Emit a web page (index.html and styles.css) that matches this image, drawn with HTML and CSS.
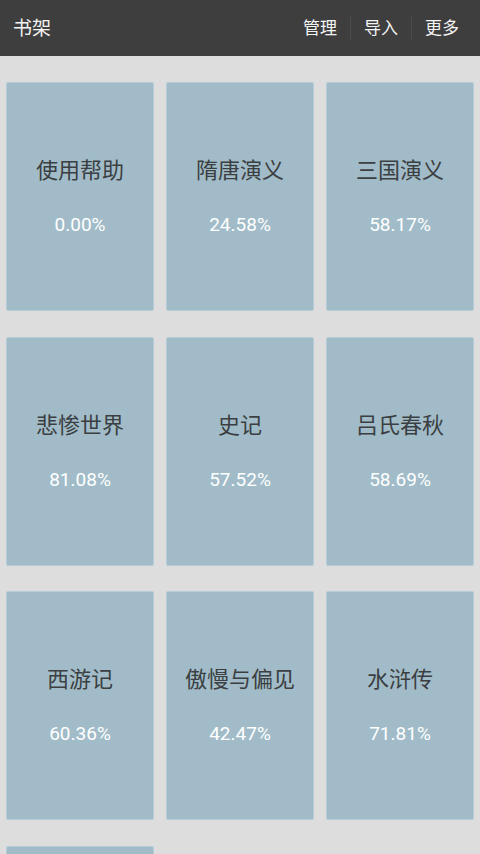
FILE: index.html
```html
<!DOCTYPE html>
<html lang="zh">
<head>
<meta charset="utf-8">
<link rel="stylesheet" href="styles.css">
</head>
<body>
<header class="bar">
  <div class="bar-title">书架</div>
  <nav class="bar-actions">
    <span class="act">管理</span>
    <span class="sep"></span>
    <span class="act">导入</span>
    <span class="sep"></span>
    <span class="act">更多</span>
  </nav>
</header>
<main class="shelf">
  <div class="book"><div class="name">使用帮助</div><div class="pct">0.00%</div></div>
  <div class="book"><div class="name">隋唐演义</div><div class="pct">24.58%</div></div>
  <div class="book"><div class="name">三国演义</div><div class="pct">58.17%</div></div>
  <div class="book"><div class="name">悲惨世界</div><div class="pct">81.08%</div></div>
  <div class="book"><div class="name">史记</div><div class="pct">57.52%</div></div>
  <div class="book"><div class="name">吕氏春秋</div><div class="pct">58.69%</div></div>
  <div class="book"><div class="name">西游记</div><div class="pct">60.36%</div></div>
  <div class="book"><div class="name">傲慢与偏见</div><div class="pct">42.47%</div></div>
  <div class="book"><div class="name">水浒传</div><div class="pct">71.81%</div></div>
  <div class="book"><div class="name">红楼梦</div><div class="pct">12.00%</div></div>
</main>
</body>
</html>
```

FILE: styles.css
```css
html, body {
  margin: 0;
  padding: 0;
  height: 854px;
  overflow: hidden;
  background: #dddddd;
  font-family: Roboto, "Noto Sans CJK SC", sans-serif;
}
.bar {
  height: 56px;
  background: #3e3e3e;
  display: flex;
  align-items: center;
  justify-content: space-between;
  padding: 0 0 0 13px;
  color: #f4f4f4;
}
.bar-title {
  font-size: 19px;
  line-height: 1;
}
.bar-actions {
  display: flex;
  align-items: center;
  padding-right: 8px;
}
.act {
  font-size: 17px;
  padding: 0 13px;
  line-height: 1;
}
.sep {
  width: 1px;
  height: 24px;
  background: #4b4b4b;
}
.shelf {
  height: 772px;
  overflow: hidden;
  display: grid;
  grid-template-columns: repeat(3, 148px);
  grid-auto-rows: 229px;
  column-gap: 12px;
  row-gap: 25.5px;
  padding: 26px 6px 0;
}
.book {
  box-sizing: border-box;
  background: #a1bcc8;
  border: 1px solid #b5cdd8;
  border-radius: 2px;
  display: flex;
  flex-direction: column;
  align-items: center;
}
.name {
  margin-top: 74px;
  font-size: 22px;
  line-height: 28px;
  color: #3b3f42;
  white-space: nowrap;
}
.pct {
  margin-top: 28px;
  font-size: 19px;
  line-height: 24px;
  color: #ffffff;
}
.book:nth-child(10) .name, .book:nth-child(10) .pct { visibility: hidden; }
```
